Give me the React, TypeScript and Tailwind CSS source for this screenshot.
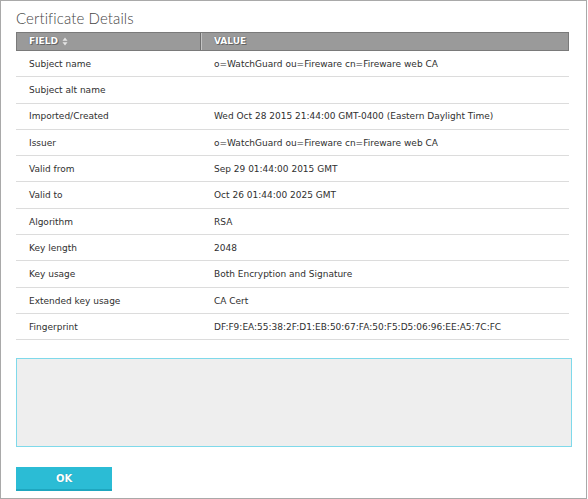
import React from "react";

const rows: [string, string][] = [
  ["Subject name", "o=WatchGuard ou=Fireware cn=Fireware web CA"],
  ["Subject alt name", ""],
  ["Imported/Created", "Wed Oct 28 2015 21:44:00 GMT-0400 (Eastern Daylight Time)"],
  ["Issuer", "o=WatchGuard ou=Fireware cn=Fireware web CA"],
  ["Valid from", "Sep 29 01:44:00 2015 GMT"],
  ["Valid to", "Oct 26 01:44:00 2025 GMT"],
  ["Algorithm", "RSA"],
  ["Key length", "2048"],
  ["Key usage", "Both Encryption and Signature"],
  ["Extended key usage", "CA Cert"],
  ["Fingerprint", "DF:F9:EA:55:38:2F:D1:EB:50:67:FA:50:F5:D5:06:96:EE:A5:7C:FC"],
];

const shadow = "[text-shadow:0_0_1px_#555,1px_1px_0_#666]";

export default function App() {
  return (
    <div className="w-[587px] h-[499px] border border-[#a9a9a9] bg-white font-['DejaVu_Sans',Verdana,sans-serif] text-[#333]">
      <div className="pl-[15px] pr-[17px] pt-[7px]">
        <h1 className="font-['Lato',sans-serif] font-light text-[15px] leading-[20px] text-[#444] tracking-[0.1px]">
          Certificate Details
        </h1>
        <div className="mt-[4px] w-[553px]">
          <div className="flex h-[19px] bg-[#9a9a9a] border border-[#7a7a7a] text-white text-[9px] font-bold leading-[17px]">
            <div className={`w-[184px] pl-[12px] flex items-center gap-[3px] border-r border-[#6f6f6f] ${shadow}`}>
              <span>FIELD</span>
              <svg width="6" height="9" viewBox="0 0 6 9" className="ml-[1px]">
                <path d="M3 0.5 L5.5 3.8 L0.5 3.8 Z" fill="#e4e4e4" />
                <path d="M3 8.5 L5.5 5.2 L0.5 5.2 Z" fill="#e4e4e4" />
              </svg>
            </div>
            <div className={`flex-1 pl-[12px] border-l border-[#c4c4c4] ${shadow}`}>VALUE</div>
          </div>
          {rows.map(([f, v]) => (
            <div
              key={f}
              className="flex h-[26.3px] pt-[2px] items-center border-b border-[#dcdcdc] text-[9px] text-[#2f2f2f]"
            >
              <div className="w-[185px] pl-[13px]">{f}</div>
              <div className="flex-1 pl-[13px]">{v}</div>
            </div>
          ))}
        </div>
        <div className="mt-[18px] w-[556px] h-[89px] bg-[#eeeeee] border border-[#7fd9ea]" />
        <button className="mt-[20px] w-[96px] h-[24px] bg-[#2bbcd5] border-b-2 border-[#1ea6bf] text-white text-[10px] font-bold font-['DejaVu_Sans',sans-serif] [text-shadow:0_0_1px_#1a8aa0]">
          OK
        </button>
      </div>
    </div>
  );
}
